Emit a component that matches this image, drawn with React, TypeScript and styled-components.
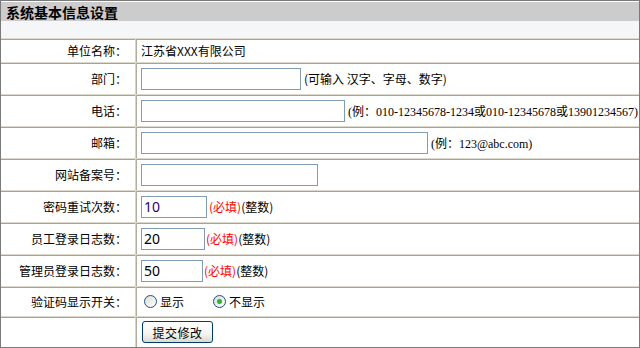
import React from "react";
import styled, { createGlobalStyle } from "styled-components";

const Global = createGlobalStyle`
  html, body { margin: 0; padding: 0; background: #fff; }
  body {
    font-family: "Noto Sans CJK SC", "Noto Sans", sans-serif;
    font-size: 12px;
    color: #000;
  }
`;

const Panel = styled.div`
  width: 640px;
  height: 348px;
  box-sizing: border-box;
  border: 1px solid #7a7a7a;
  overflow: hidden;
  background: #fff;
`;

const Title = styled.div`
  height: 20px;
  box-sizing: border-box;
  border-top: 1px solid #fff;
  background: #cccccc;
  font-weight: bold;
  font-size: 14px;
  line-height: 21px;
  padding-left: 5px;
  overflow: hidden;
`;

const Spacer = styled.div`
  height: 17px;
  background: #f5f6f8;
`;

const Row = styled.div<{ $h: number }>`
  display: grid;
  grid-template-columns: 135px 1fr;
  height: ${(p) => p.$h}px;
  box-sizing: border-box;
  border-top: 1px solid #dcd9cc;
  box-shadow: inset 0 1px 0 #a7a491;
`;

const Label = styled.div`
  display: flex;
  align-items: center;
  justify-content: flex-end;
  padding-right: 8px;
  border-right: 1px solid #d8d5c8;
  white-space: nowrap;
`;

const Value = styled.div`
  display: flex;
  align-items: center;
  padding-left: 4px;
  border-left: 1px solid #b0ad9a;
  white-space: nowrap;
  overflow: hidden;
`;

const TextInput = styled.input<{ $w: number; $color?: string }>`
  width: ${(p) => p.$w}px;
  height: 22px;
  box-sizing: border-box;
  border: 1px solid #7f9db9;
  padding: 0 2px;
  margin: 0;
  font-family: "Noto Sans", "Liberation Sans", sans-serif;
  font-size: 14px;
  color: ${(p) => p.$color || "#000"};
  background: #fff;
  outline: none;
  flex: none;
`;

const Hint = styled.span<{ $serif?: boolean; $color?: string; $ml?: number }>`
  margin-left: ${(p) => p.$ml || 0}px;
  color: ${(p) => p.$color || "#000"};
  font-family: ${(p) =>
    p.$serif
      ? `"Liberation Serif", "Noto Sans CJK SC", serif`
      : `"Noto Sans CJK SC", sans-serif`};
  font-size: 12px;
`;

const RadioOption = styled.label<{ $ml: number }>`
  display: inline-flex;
  align-items: center;
  gap: 3px;
  margin-left: ${(p) => p.$ml}px;
  font-size: 12px;
`;

const Radio = styled.input`
  appearance: none;
  -webkit-appearance: none;
  width: 13px;
  height: 13px;
  margin: 0;
  box-sizing: border-box;
  border: 1px solid #1c5180;
  border-radius: 50%;
  background: linear-gradient(135deg, #dcdcd7, #ffffff);
  flex: none;
  &:checked {
    background: radial-gradient(circle, #2fb52f 0 2px, #7fd07f 2.5px, transparent 3px),
      linear-gradient(135deg, #dcdcd7, #ffffff);
  }
`;

const SubmitButton = styled.button`
  margin-left: 1px;
  width: 71px;
  height: 22px;
  box-sizing: border-box;
  border: 1px solid #003c74;
  border-radius: 3px;
  background: linear-gradient(#ffffff, #f4f4f0 60%, #dcd8cc);
  font-family: "Noto Sans CJK SC", sans-serif;
  font-size: 12px;
  letter-spacing: 0.5px;
  color: #000;
  padding: 0;
  cursor: pointer;
`;

export default function App() {
  return (
    <>
      <Global />
      <Panel>
        <Title>系统基本信息设置</Title>
        <Spacer />
        <Row $h={24}>
          <Label>单位名称：</Label>
          <Value>江苏省XXX有限公司</Value>
        </Row>
        <Row $h={32}>
          <Label>部门：</Label>
          <Value>
            <TextInput $w={160} />
            <Hint $ml={3}>(可输入 汉字、字母、数字)</Hint>
          </Value>
        </Row>
        <Row $h={32}>
          <Label>电话：</Label>
          <Value>
            <TextInput $w={204} />
            <Hint $serif $ml={3}>
              (例：010-12345678-1234或010-12345678或13901234567)
            </Hint>
          </Value>
        </Row>
        <Row $h={32}>
          <Label>邮箱：</Label>
          <Value>
            <TextInput $w={287} />
            <Hint $serif $ml={3}>
              (例：123@abc.com)
            </Hint>
          </Value>
        </Row>
        <Row $h={32}>
          <Label>网站备案号：</Label>
          <Value>
            <TextInput $w={177} />
          </Value>
        </Row>
        <Row $h={32}>
          <Label>密码重试次数：</Label>
          <Value>
            <TextInput $w={66} $color="#300070" defaultValue="10" />
            <Hint $ml={2} $color="#ff0000">(必填)</Hint>
            <Hint>(整数)</Hint>
          </Value>
        </Row>
        <Row $h={32}>
          <Label>员工登录日志数：</Label>
          <Value>
            <TextInput $w={64} defaultValue="20" />
            <Hint $ml={1} $color="#ff0000">(必填)</Hint>
            <Hint>(整数)</Hint>
          </Value>
        </Row>
        <Row $h={32}>
          <Label>管理员登录日志数：</Label>
          <Value>
            <TextInput $w={62} defaultValue="50" />
            <Hint $ml={1} $color="#ff0000">(必填)</Hint>
            <Hint>(整数)</Hint>
          </Value>
        </Row>
        <Row $h={30}>
          <Label>验证码显示开关：</Label>
          <Value>
            <RadioOption $ml={3}>
              <Radio type="radio" name="captcha" />
              显示
            </RadioOption>
            <RadioOption $ml={29}>
              <Radio type="radio" name="captcha" defaultChecked />
              不显示
            </RadioOption>
          </Value>
        </Row>
        <Row $h={31}>
          <Label />
          <Value>
            <SubmitButton type="button">提交修改</SubmitButton>
          </Value>
        </Row>
      </Panel>
    </>
  );
}
